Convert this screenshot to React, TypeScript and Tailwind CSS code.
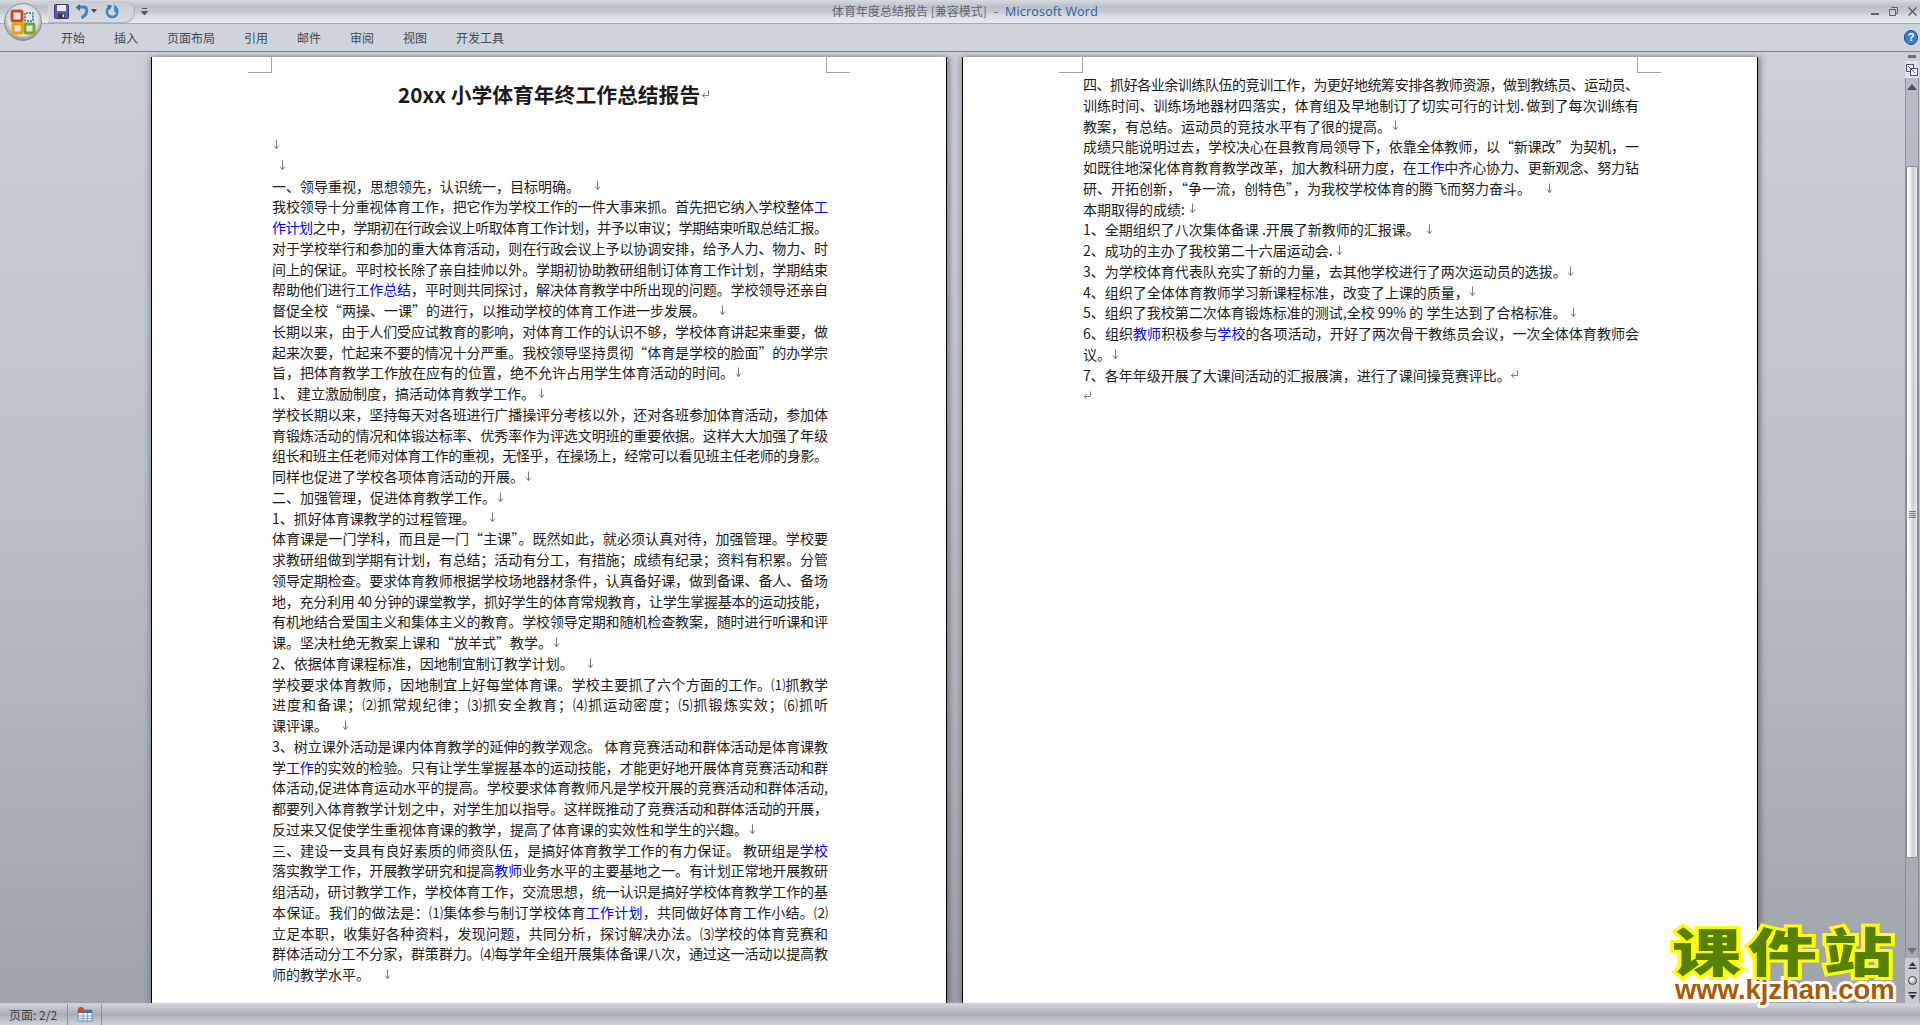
import React from "react";

const BLUE = /\{(.*?)\}/;

function Arrow() {
  return (
    <svg width="7" height="11" viewBox="0 0 7 11" className="shrink-0">
      <path d="M3.5 0.5V9M1.2 6.5L3.5 9.8L5.8 6.5" stroke="#7c7c7c" strokeWidth="1" fill="none" />
    </svg>
  );
}

function Para() {
  return (
    <svg width="9" height="9" viewBox="0 0 9 9" className="shrink-0">
      <path d="M7.5 0.5V5.5H1.5M4 3L1.2 5.5L4 8" stroke="#7c7c7c" strokeWidth="1" fill="none" />
    </svg>
  );
}

function Rich({ t }: { t: string }) {
  const parts = t.split(BLUE);
  return (
    <>
      {parts.map((p, i) =>
        i % 2 === 1 ? (
          <span key={i} className="text-[#0000ff]">
            {p}
          </span>
        ) : (
          <span key={i}>{p}</span>
        )
      )}
    </>
  );
}

// Justified full line
function J({ t }: { t: string }) {
  return (
    <div className="h-[20.75px] leading-[20.75px] w-[555px] whitespace-nowrap text-justify [text-align-last:justify] tracking-[-1px]">
      <Rich t={t} />
    </div>
  );
}

// Closing line of a paragraph: text, then a break mark at the given offset from the margin
function E({ t, x, para }: { t: string; x: number; para?: boolean }) {
  return (
    <div className="h-[20.75px] leading-[20.75px] flex items-center whitespace-nowrap">
      <div style={{ width: x }} className="shrink-0">
        <Rich t={t} />
      </div>
      {para ? <Para /> : <Arrow />}
    </div>
  );
}

function Marks() {
  return (
    <div className="h-[16px] px-[96px] flex justify-between shrink-0">
      <div className="w-[24px] h-[16px] border-r border-b border-[#a3a3a3]" />
      <div className="w-[24px] h-[16px] border-l border-b border-[#a3a3a3]" />
    </div>
  );
}

function Page1() {
  return (
    <div className="w-[796px] h-[946px] shrink-0 bg-white border-x border-black overflow-hidden shadow-[3px_0_5px_rgba(60,60,70,0.45),-3px_0_5px_rgba(60,60,70,0.25)] text-[14px] text-[#1c1c1c]">
      <Marks />
      <div className="mt-[7px] h-[28px] pl-[246px] flex items-center whitespace-nowrap text-[20.8px] font-bold leading-[28px]">
        <span>20xx 小学体育年终工作总结报告</span>
        <span className="ml-[1px]">
          <Para />
        </span>
      </div>
      <div className="mt-[26px] px-[120px]">
        <E t="" x={1} />
        <E t="" x={7} />
        <E t="一、领导重视，思想领先，认识统一，目标明确。" x={322} />
        <J t="我校领导十分重视体育工作，把它作为学校工作的一件大事来抓。首先把它纳入学校整体{工}" />
        <J t="{作计划}之中，学期初在行政会议上听取体育工作计划，并予以审议；学期结束听取总结汇报。" />
        <J t="对于学校举行和参加的重大体育活动，则在行政会议上予以协调安排，给予人力、物力、时" />
        <J t="间上的保证。平时校长除了亲自挂帅以外。学期初协助教研组制订体育工作计划，学期结束" />
        <J t="帮助他们进行{工作总结}，平时则共同探讨，解决体育教学中所出现的问题。学校领导还亲自" />
        <E t="督促全校“两操、一课”的进行，以推动学校的体育工作进一步发展。" x={447} />
        <J t="长期以来，由于人们受应试教育的影响，对体育工作的认识不够，学校体育讲起来重要，做" />
        <J t="起来次要，忙起来不要的情况十分严重。我校领导坚持贯彻“体育是学校的脸面”的办学宗" />
        <E t="旨，把体育教学工作放在应有的位置，绝不允许占用学生体育活动的时间。" x={463} />
        <E t="1、 建立激励制度，搞活动体育教学工作。" x={266} />
        <J t="学校长期以来，坚持每天对各班进行广播操评分考核以外，还对各班参加体育活动，参加体" />
        <J t="育锻炼活动的情况和体锻达标率、优秀率作为评选文明班的重要依据。这样大大加强了年级" />
        <J t="组长和班主任老师对体育工作的重视，无怪乎，在操场上，经常可以看见班主任老师的身影。" />
        <E t="同样也促进了学校各项体育活动的开展。" x={253} />
        <E t="二、加强管理，促进体育教学工作。" x={225} />
        <E t="1、抓好体育课教学的过程管理。" x={217} />
        <J t="体育课是一门学科，而且是一门“主课”。既然如此，就必须认真对待，加强管理。学校要" />
        <J t="求教研组做到学期有计划，有总结；活动有分工，有措施；成绩有纪录；资料有积累。分管" />
        <J t="领导定期检查。要求体育教师根据学校场地器材条件，认真备好课，做到备课、备人、备场" />
        <J t="地，充分利用 40 分钟的课堂教学，抓好学生的体育常规教育，让学生掌握基本的运动技能，" />
        <J t="有机地结合爱国主义和集体主义的教育。学校领导定期和随机检查教案，随时进行听课和评" />
        <E t="课。坚决杜绝无教案上课和“放羊式”教学。" x={281} />
        <E t="2、依据体育课程标准，因地制宜制订教学计划。" x={315} />
        <J t="学校要求体育教师，因地制宜上好每堂体育课。学校主要抓了六个方面的工作。⑴抓教学" />
        <J t="进度和备课；⑵抓常规纪律；⑶抓安全教育；⑷抓运动密度；⑸抓锻炼实效；⑹抓听" />
        <E t="课评课。" x={70} />
        <J t="3、树立课外活动是课内体育教学的延伸的教学观念。 体育竞赛活动和群体活动是体育课教" />
        <J t="学{工作}的实效的检验。只有让学生掌握基本的运动技能，才能更好地开展体育竞赛活动和群" />
        <J t="体活动,促进体育运动水平的提高。学校要求体育教师凡是学校开展的竞赛活动和群体活动," />
        <J t="都要列入体育教学计划之中，对学生加以指导。这样既推动了竞赛活动和群体活动的开展，" />
        <E t="反过来又促使学生重视体育课的教学，提高了体育课的实效性和学生的兴趣。" x={477} />
        <J t="三、建设一支具有良好素质的师资队伍，是搞好体育教学工作的有力保证。 教研组是{学校}" />
        <J t="落实教学工作，开展教学研究和提高{教师}业务水平的主要基地之一。有计划正常地开展教研" />
        <J t="组活动，研讨教学工作，学校体育工作，交流思想，统一认识是搞好学校体育教学工作的基" />
        <J t="本保证。我们的做法是：⑴集体参与制订学校体育{工作计划}，共同做好体育工作小结。⑵" />
        <J t="立足本职，收集好各种资料，发现问题，共同分析，探讨解决办法。⑶学校的体育竞赛和" />
        <J t="群体活动分工不分家，群策群力。⑷每学年全组开展集体备课八次，通过这一活动以提高教" />
        <E t="师的教学水平。" x={112} />
      </div>
    </div>
  );
}

function Page2() {
  return (
    <div className="w-[796px] h-[946px] shrink-0 bg-white border-x border-black overflow-hidden shadow-[3px_0_5px_rgba(60,60,70,0.45),-3px_0_5px_rgba(60,60,70,0.25)] text-[14px] text-[#1c1c1c]">
      <Marks />
      <div className="mt-[1px] px-[120px]">
        <J t="四、抓好各业余训练队伍的竞训工作，为更好地统筹安排各教师资源，做到教练员、运动员、" />
        <J t="训练时间、训练场地器材四落实，体育组及早地制订了切实可行的计划. 做到了每次训练有" />
        <E t="教案，有总结。运动员的竞技水平有了很的提高。" x={309} />
        <J t="成绩只能说明过去，学校决心在县教育局领导下，依靠全体教师，以“新课改”为契机，一" />
        <J t="如既往地深化体育教育教学改革，加大教科研力度，在{工作}中齐心协力、更新观念、努力钻" />
        <E t="研、开拓创新，“争一流，创特色”，为我校学校体育的腾飞而努力奋斗。" x={463} />
        <E t="本期取得的成绩:" x={106} />
        <E t="1、全期组织了八次集体备课 .开展了新教师的汇报课。" x={343} />
        <E t="2、成功的主办了我校第二十六届运动会." x={253} />
        <E t="3、为学校体育代表队充实了新的力量，去其他学校进行了两次运动员的选拔。" x={484} />
        <E t="4、组织了全体体育教师学习新课程标准，改变了上课的质量，" x={386} />
        <E t="5、组织了我校第二次体育锻炼标准的测试,全校 99% 的 学生达到了合格标准。" x={487} />
        <J t="6、组织{教师}积极参与{学校}的各项活动，开好了两次骨干教练员会议，一次全体体育教师会" />
        <E t="议。" x={29} />
        <E t="7、各年年级开展了大课间活动的汇报展演，进行了课间操竞赛评比。" x={427} para />
        <E t="" x={0} para />
      </div>
    </div>
  );
}

function OfficeButton() {
  return (
    <div className="absolute left-[4px] top-[3px]">
      <svg width="38" height="38" viewBox="0 0 38 38">
        <defs>
          <radialGradient id="orb" cx="50%" cy="40%" r="60%">
            <stop offset="0%" stopColor="#f8f8f8" />
            <stop offset="70%" stopColor="#d7d9dc" />
            <stop offset="100%" stopColor="#8d8f92" />
          </radialGradient>
        </defs>
        <circle cx="19" cy="19" r="18.4" fill="url(#orb)" stroke="#8b8d90" />
        <circle cx="19" cy="19" r="14.5" fill="#e9e6dd" opacity="0.7" />
        <rect x="8" y="8" width="10" height="10" rx="1.5" fill="none" stroke="#d2481b" strokeWidth="3" />
        <rect x="21" y="10" width="8" height="8" rx="1" fill="none" stroke="#3b8ccb" strokeWidth="2" strokeDasharray="2 1" />
        <rect x="9" y="21" width="9" height="9" rx="1" fill="none" stroke="#f2a20c" strokeWidth="3" />
        <rect x="21" y="21" width="9" height="9" rx="1" fill="none" stroke="#6fa92d" strokeWidth="3" />
        <circle cx="19.5" cy="19.5" r="1.4" fill="#e8a317" />
      </svg>
    </div>
  );
}

function SaveIcon() {
  return (
    <svg width="15" height="15" viewBox="0 0 15 15">
      <rect x="0.5" y="0.5" width="14" height="14" rx="1" fill="#5a5fb4" stroke="#34377c" />
      <rect x="3" y="1" width="9" height="6" fill="#e9ebf5" />
      <rect x="4" y="9.5" width="7" height="5" fill="#3a3a3a" />
      <rect x="8.5" y="10.2" width="1.6" height="3" fill="#d8d8d8" />
    </svg>
  );
}

function UndoIcon() {
  return (
    <svg width="14" height="15" viewBox="0 0 14 15">
      <path d="M2.5 3H9C12.5 3 13 9 8.5 12.5L6.5 14" stroke="#3f88c8" strokeWidth="3" fill="none" />
      <path d="M5 0V7L0.5 3.4Z" fill="#2a70b4" />
    </svg>
  );
}

function RedoIcon() {
  return (
    <svg width="14" height="15" viewBox="0 0 14 15">
      <path d="M4 3.5C0.8 5.5 1 12.5 7 13C12.5 13 13.5 6.5 10.5 3.5V8" stroke="#3f88c8" strokeWidth="2.6" fill="none" />
      <path d="M2 1L7 1.5L4.5 6Z" fill="#2a70b4" />
    </svg>
  );
}

function HelpIcon() {
  return (
    <div className="w-[14px] h-[15px] rounded-full bg-[#3b7fd0] border border-[#1d4f96] flex items-center justify-center text-[11px] font-bold leading-none text-white [font-family:'Liberation_Sans',sans-serif]">
      ?
    </div>
  );
}

function TitleBar() {
  return (
    <div className="h-[24px] shrink-0 flex items-center bg-[linear-gradient(#d6dae1_0%,#bcc0ca_28%,#c5c9d2_50%,#dde1e8_75%,#e6e9f0_100%)] border-b border-[#a8abb3]">
      <div className="flex items-center ml-[48px] w-[87px] h-[22px] rounded-r-[12px] border-r border-b border-[#b0b4bd] bg-[linear-gradient(#c9ccd4,#d8dbe2)] pl-[6px] shrink-0">
        <SaveIcon />
        <span className="ml-[6px]">
          <UndoIcon />
        </span>
        <svg width="6" height="4" viewBox="0 0 6 4" className="ml-[2px]">
          <path d="M0 0H6L3 4Z" fill="#4a4d55" />
        </svg>
        <span className="ml-[8px]">
          <RedoIcon />
        </span>
      </div>
      <svg width="7" height="8" viewBox="0 0 7 8" className="ml-[6px] shrink-0">
        <path d="M1 0.5H6M0.5 3.5H6.5L3.5 7Z" stroke="#555" strokeWidth="1" fill="#555" />
      </svg>
      <div className="ml-[684px] whitespace-nowrap text-[12px] text-[#62666e]">
        体育年度总结报告 [兼容模式]
        <span className="ml-[7px]">-</span>
        <span className="ml-[7px] text-[#2b62a3] text-[12.5px] tracking-[0.2px] [font-family:'Open_Sans',sans-serif]">
          Microsoft Word
        </span>
      </div>
      <div className="ml-auto flex items-center gap-[10px] pr-[3px] text-[#5f636b]">
        <svg width="8" height="3" viewBox="0 0 8 3" className="mt-[6px]">
          <rect width="8" height="2" fill="#5f636b" />
        </svg>
        <svg width="9" height="9" viewBox="0 0 9 9">
          <path d="M2.5 0.5H8.5V6.5H6.5M0.5 2.5H6.5V8.5H0.5Z" stroke="#5f636b" fill="none" />
        </svg>
        <svg width="9" height="9" viewBox="0 0 9 9">
          <path d="M0.5 0.5L8.5 8.5M8.5 0.5L0.5 8.5" stroke="#5f636b" strokeWidth="1.5" />
        </svg>
      </div>
    </div>
  );
}

function Tabs() {
  const tabs = ["开始", "插入", "页面布局", "引用", "邮件", "审阅", "视图", "开发工具"];
  return (
    <div className="h-[28px] shrink-0 flex items-center pl-[61px] pr-[2px] bg-[#cfd3dc] border-b border-[#7e8187] text-[12px] text-[#434b58]">
      <div className="flex gap-[29px] whitespace-nowrap">
        {tabs.map((t) => (
          <span key={t}>{t}</span>
        ))}
      </div>
      <div className="ml-auto">
        <HelpIcon />
      </div>
    </div>
  );
}

function Scrollbar() {
  return (
    <div className="ml-auto mr-[1px] -mt-[5px] w-[14px] h-[951px] shrink-0 flex flex-col">
      <div className="h-[3px] mt-[3px] mx-[3px] bg-[#6f7278] shrink-0" />
      <div className="h-[17px] mt-[3px] shrink-0 bg-[#dfe2ea] flex items-center justify-center">
        <svg width="12" height="12" viewBox="0 0 12 12">
          <rect x="0.5" y="0.5" width="7" height="7" fill="#f3f4fa" stroke="#4a5570" />
          <rect x="4.5" y="4.5" width="7" height="7" fill="#f3f4fa" stroke="#4a5570" />
          <path d="M2 2L9 9" stroke="#4a5570" />
        </svg>
      </div>
      <div className="h-[880px] shrink-0 flex flex-col bg-[linear-gradient(#b7bbc5,#a6aab3)] border-x border-[#8d9098]">
        <div className="h-[88px] shrink-0 flex justify-center pt-[6px]">
          <svg width="10" height="6" viewBox="0 0 10 6">
            <path d="M5 0L10 6H0Z" fill="#4b5263" />
          </svg>
        </div>
        <div className="h-[692px] shrink-0 rounded-[2px] border border-[#8a8e96] bg-[linear-gradient(90deg,#ffffff_0%,#f4f1ea_30%,#c9cdd8_60%,#e9ebef_100%)] flex flex-col items-center pt-[344px] gap-[1px]">
          <div className="w-[7px] h-[1px] bg-[#777b84]" />
          <div className="w-[7px] h-[1px] bg-[#777b84]" />
          <div className="w-[7px] h-[1px] bg-[#777b84]" />
          <div className="w-[7px] h-[1px] bg-[#777b84]" />
        </div>
        <div className="flex-1 flex justify-center items-end pb-[4px]">
          <svg width="10" height="6" viewBox="0 0 10 6">
            <path d="M0 0H10L5 6Z" fill="#737782" />
          </svg>
        </div>
      </div>
      <div className="flex-1 bg-[#c6cad2] flex flex-col items-center justify-around py-[1px]">
        <svg width="9" height="9" viewBox="0 0 9 9">
          <path d="M4.5 0L8 4H1ZM0.5 5.5H8.5V7H0.5Z" fill="#333" />
        </svg>
        <div className="w-[9px] h-[9px] rounded-full border border-[#444] bg-[radial-gradient(circle_at_35%_30%,#fff,#888)]" />
        <svg width="9" height="9" viewBox="0 0 9 9">
          <path d="M0.5 2H8.5V3.5H0.5ZM4.5 9L1 5H8Z" fill="#333" />
        </svg>
      </div>
    </div>
  );
}

function StatusBar() {
  return (
    <div className="h-[22px] shrink-0 flex items-center border-t border-[#c9cdd5] bg-[linear-gradient(#d0d3da_0%,#bcc0c8_25%,#a9adb5_50%,#bcc0c8_75%,#cdd1d9_100%)] text-[12px] text-[#3d434e]">
      <span className="pl-[9px] w-[67px] whitespace-nowrap">页面: 2/2</span>
      <div className="w-[1px] h-full bg-[#eef0f3] border-l border-[#8f9299]" />
      <div className="w-[33px] flex justify-center">
        <svg width="16" height="15" viewBox="0 0 16 15">
          <rect x="1" y="3" width="14" height="11" fill="#eef3fb" stroke="#6d8db5" />
          <rect x="1" y="3" width="14" height="3" fill="#3f75bd" />
          <path d="M1 9H15M1 11.5H15M6 6V14M10.5 6V14" stroke="#8aa6cc" />
          <circle cx="4" cy="3" r="3" fill="#d9432a" />
        </svg>
      </div>
      <div className="w-[1px] h-full bg-[#eef0f3] border-l border-[#8f9299]" />
    </div>
  );
}

function Logo() {
  return (
    <div className="absolute left-[1672px] top-[921px] w-[240px] whitespace-nowrap pointer-events-none">
      <div className="h-[57px] leading-[57px] text-[52px] font-black text-[#588000] origin-left [transform:scaleX(1.33)] tracking-[5px] [-webkit-text-stroke:6px_#ffff00] [paint-order:stroke_fill] [font-family:'Noto_Sans_CJK_SC',sans-serif]">
        课件站
      </div>
      <div className="h-[24px] leading-[24px] text-[27.4px] font-bold text-[#a85a00] ml-[3px] [-webkit-text-stroke:6px_#ffffff] [paint-order:stroke_fill] [font-family:'Liberation_Sans',sans-serif]">
        www.kjzhan.com
      </div>
    </div>
  );
}

export default function App() {
  return (
    <div className="relative w-[1920px] h-[1025px] overflow-hidden flex flex-col [font-family:'Noto_Sans_CJK_SC','Noto_Sans',sans-serif]">
      <TitleBar />
      <Tabs />
      <div className="h-[951px] shrink-0 flex pt-[5px] pl-[151px] gap-[15px] bg-[linear-gradient(#ccd0d8_0%,#c2c6ce_30%,#b2b6bd_65%,#9fa3aa_100%)]">
        <Page1 />
        <Page2 />
        <Scrollbar />
      </div>
      <StatusBar />
      <OfficeButton />
      <Logo />
    </div>
  );
}
